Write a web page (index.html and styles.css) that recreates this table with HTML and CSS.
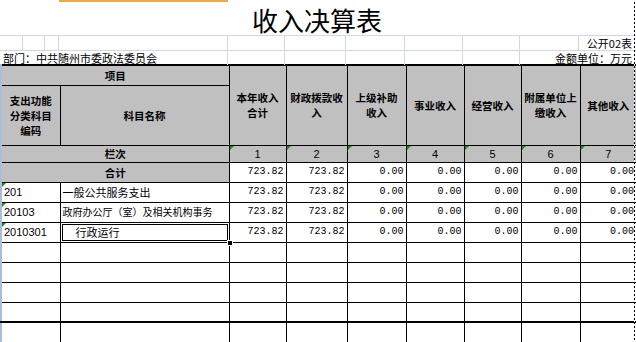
FILE: index.html
```html
<!DOCTYPE html>
<html lang="zh">
<head>
<meta charset="utf-8">
<title>收入决算表</title>
<link rel="stylesheet" href="styles.css">
</head>
<body>
<div class="sheet">
  <div class="topstrip"><span class="colsel"></span></div>
  <div class="title">收入决算表</div>
  <div class="gridrow r2">
    <div class="gc"></div><div class="gc"></div><div class="gc"></div><div class="gc"></div>
    <div class="gc"></div><div class="gc"></div><div class="gc"></div><div class="gc"></div>
    <div class="gc"></div><div class="gc"></div>
    <div class="gc right last">公开02表</div>
  </div>
  <div class="gridrow r3">
    <div class="gc span4 left">部门：中共随州市委政法委员会</div>
    <div class="gc"></div><div class="gc"></div><div class="gc"></div><div class="gc"></div><div class="gc"></div>
    <div class="gc span2 right last">金额单位：万元</div>
  </div>
  <table class="report">
    <colgroup>
      <col class="c1"><col class="c2"><col class="c3"><col class="c4"><col class="c5">
      <col class="c6"><col class="c7"><col class="c8"><col class="c9">
    </colgroup>
    <tr class="h1">
      <td class="hd" colspan="2">项目</td>
      <td class="hd" rowspan="2">本年收入<br>合计</td>
      <td class="hd" rowspan="2">财政拨款收<br>入</td>
      <td class="hd" rowspan="2">上级补助<br>收入</td>
      <td class="hd" rowspan="2">事业收入</td>
      <td class="hd" rowspan="2">经营收入</td>
      <td class="hd" rowspan="2">附属单位上<br>缴收入</td>
      <td class="hd" rowspan="2">其他收入</td>
    </tr>
    <tr class="h2">
      <td class="hd">支出功能<br>分类科目<br>编码</td>
      <td class="hd">科目名称</td>
    </tr>
    <tr class="rc">
      <td class="hd" colspan="2">栏次</td>
      <td class="hd idx tri">1</td>
      <td class="hd idx tri">2</td>
      <td class="hd idx tri">3</td>
      <td class="hd idx tri">4</td>
      <td class="hd idx tri">5</td>
      <td class="hd idx tri">6</td>
      <td class="hd idx tri">7</td>
    </tr>
    <tr class="row">
      <td class="hd" colspan="2">合计</td>
      <td class="num">723.82</td><td class="num">723.82</td><td class="num">0.00</td><td class="num">0.00</td>
      <td class="num">0.00</td><td class="num">0.00</td><td class="num">0.00</td>
    </tr>
    <tr class="row">
      <td class="code tri">201</td>
      <td class="name">一般公共服务支出</td>
      <td class="num">723.82</td><td class="num">723.82</td><td class="num">0.00</td><td class="num">0.00</td>
      <td class="num">0.00</td><td class="num">0.00</td><td class="num">0.00</td>
    </tr>
    <tr class="row">
      <td class="code tri">20103</td>
      <td class="name small">政府办公厅（室）及相关机构事务</td>
      <td class="num">723.82</td><td class="num">723.82</td><td class="num">0.00</td><td class="num">0.00</td>
      <td class="num">0.00</td><td class="num">0.00</td><td class="num">0.00</td>
    </tr>
    <tr class="row">
      <td class="code tri">2010301</td>
      <td class="name indent sel">行政运行</td>
      <td class="num">723.82</td><td class="num">723.82</td><td class="num">0.00</td><td class="num">0.00</td>
      <td class="num">0.00</td><td class="num">0.00</td><td class="num">0.00</td>
    </tr>
    <tr class="row"><td></td><td></td><td></td><td></td><td></td><td></td><td></td><td></td><td></td></tr>
    <tr class="row"><td></td><td></td><td></td><td></td><td></td><td></td><td></td><td></td><td></td></tr>
    <tr class="row"><td></td><td></td><td></td><td></td><td></td><td></td><td></td><td></td><td></td></tr>
    <tr class="row thick"><td></td><td></td><td></td><td></td><td></td><td></td><td></td><td></td><td></td></tr>
    <tr class="row"><td></td><td></td><td></td><td></td><td></td><td></td><td></td><td></td><td></td></tr>
  </table>
  <div class="pagebreak"></div>
</div>
</body>
</html>
```
FILE: styles.css
```css
html, body {
  margin: 0;
  padding: 0;
  background: #fff;
}
.sheet {
  position: relative;
  width: 636px;
  height: 342px;
  overflow: hidden;
  background: #fff;
  font-family: "Noto Sans CJK SC", "Liberation Sans", sans-serif;
  color: #000;
}
.topstrip {
  height: 2px;
  display: flex;
}
.colsel {
  display: block;
  margin-left: 59px;
  width: 169px;
  height: 2px;
  background: #f2a744;
}
.title {
  box-sizing: border-box;
  height: 34px;
  border-bottom: 1px solid #d0d7e5;
  text-align: center;
  font-size: 26px;
  line-height: 36px;
  padding-right: 2px;
}
.gridrow {
  display: grid;
  grid-template-columns: 23px 22px 14px 169px 57px 61px 59px 58px 57px 59px 57px;
  box-sizing: border-box;
  font-size: 11px;
  white-space: nowrap;
}
.r2 {
  height: 15px;
  border-bottom: 1px solid #d0d7e5;
}
.r3 {
  height: 13px;
}
.gc {
  border-right: 1px solid #d0d7e5;
  line-height: 14px;
  overflow: visible;
}
.gc.last {
  border-right: none;
  padding-right: 4px;
}
.gc.span4 { grid-column: span 4; }
.gc.span2 { grid-column: span 2; }
.gc.left { padding-left: 3px; }
.gc.right { text-align: right; }

.report {
  border-collapse: collapse;
  table-layout: fixed;
  width: 635px;
  border-top: 2px solid #000;
  border-left: 2px solid #a9bedb;
}
.c1 { width: 59px; }
.c2 { width: 169px; }
.c3 { width: 57px; }
.c4 { width: 61px; }
.c5 { width: 59px; }
.c6 { width: 58px; }
.c7 { width: 57px; }
.c8 { width: 59px; }
.c9 { width: 56px; }
.report td {
  border: 1px solid #000;
  padding: 0;
  font-size: 11px;
  line-height: 14px;
  white-space: nowrap;
  overflow: hidden;
  position: relative;
}
.report tr > td:first-child {
  border-left: 2px solid #a9bedb;
}
.report tr > td:last-child {
  border-right: none;
}
.h1 { height: 20px; }
.h2 { height: 60px; }
.rc { height: 17px; }
.row { height: 20px; }
.thick > td { border-bottom: 2px solid #000; }
.report td.hd {
  background: #c0c0c0;
  text-align: center;
  vertical-align: middle;
  font-weight: 700;
  font-size: 10.5px;
  line-height: 15px;
}
.report td.hd.idx {
  font-family: "Liberation Sans", sans-serif;
  font-weight: 400;
  font-size: 11px;
  line-height: 14px;
}
.tri::before {
  content: "";
  position: absolute;
  left: 0;
  top: 0;
  border-top: 4px solid #1d8a1d;
  border-right: 4px solid transparent;
}
.report td.num {
  text-align: right;
  padding-right: 2px;
  font-family: "Liberation Mono", monospace;
  font-size: 10px;
}
.report td.code {
  font-family: "Liberation Sans", sans-serif;
  padding-left: 2px;
}
.report td.name {
  padding-left: 2px;
}
.report td.name.small {
  font-size: 10px;
}
.report td.name.indent {
  padding-left: 15px;
}
.report td.sel {
  box-shadow: inset 0 0 0 1px #fff, inset 0 0 0 2px #000;
  overflow: visible;
}
.sel::after {
  content: "";
  position: absolute;
  right: -4px;
  bottom: -4px;
  width: 4px;
  height: 4px;
  background: #000;
  border: 1px solid #fff;
  z-index: 2;
}
.pagebreak {
  position: absolute;
  left: 634px;
  top: 2px;
  width: 1px;
  height: 340px;
  background: repeating-linear-gradient(to bottom, #000 0, #000 2px, #fff 2px, #fff 4px);
  z-index: 3;
}
```
